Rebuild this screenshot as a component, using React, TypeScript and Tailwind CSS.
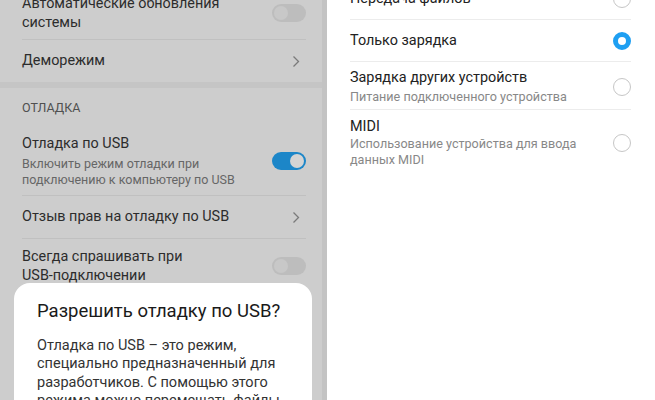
import React from 'react';

const Chevron = () => (
  <svg width="8" height="13" viewBox="0 0 8 13" fill="none">
    <path d="M1.5 1.5L6.5 6.5L1.5 11.5" stroke="#7a7a7a" strokeWidth="1.3" />
  </svg>
);

const Toggle = ({ on }: { on: boolean }) =>
  on ? (
    <div className="flex h-[18px] w-[34px] items-center justify-end rounded-full bg-[#1c86c8] px-[2px]">
      <div className="h-[14px] w-[14px] rounded-full bg-[#d4d4d4]" />
    </div>
  ) : (
    <div className="flex h-[18px] w-[34px] items-center rounded-full bg-[#bdbdbd] px-[2px]">
      <div className="h-[14px] w-[14px] rounded-full bg-[#c8c8c8]" />
    </div>
  );

const Radio = ({ on }: { on?: boolean }) =>
  on ? (
    <div className="h-[18px] w-[18px] rounded-full border-[5px] border-[#1e9ff2] bg-white" />
  ) : (
    <div className="h-[18px] w-[18px] rounded-full border border-[#c6c6c6] bg-white" />
  );

const App = () => {
  return (
    <div className="flex h-[400px] w-[655px] overflow-hidden bg-white font-['Roboto',sans-serif]">
      {/* left: settings dimmed behind dialog */}
      <div className="relative flex h-[400px] w-[327px] shrink-0 overflow-hidden bg-[#cdcdcd]">
        <div className="flex w-[322px] flex-col">
          <div className="-mt-[14px] pl-[22px] pr-[16px]">
            <div className="flex items-center justify-between border-b border-[#c0c0c0] pt-[8px] pb-[7px]">
              <div className="text-[14.4px] leading-[19px] text-[#2c2c2c]">
                Автоматические обновления
                <br />
                системы
              </div>
              <Toggle on={false} />
            </div>
            <div className="flex h-[42px] items-center justify-between pr-[6px]">
              <span className="text-[14.4px] text-[#2c2c2c]">Деморежим</span>
              <Chevron />
            </div>
          </div>
          <div className="h-[6px] bg-[#c5c5c5]" />
          <div className="pl-[22px] pr-[16px]">
            <div className="h-[37px] pt-[12px] text-[12.5px] leading-[16px] text-[#505050]">ОТЛАДКА</div>
            <div className="flex items-center justify-between border-b border-[#c0c0c0] pt-[9px] pb-[7px]">
              <div>
                <div className="text-[14.4px] leading-[19px] text-[#2c2c2c]">Отладка по USB</div>
                <div className="mt-[3px] text-[12.5px] leading-[16px] text-[#666666]">
                  Включить режим отладки при
                  <br />
                  подключению к компьютеру по USB
                </div>
              </div>
              <Toggle on />
            </div>
            <div className="flex h-[43px] items-center justify-between border-b border-[#c0c0c0] pr-[6px]">
              <span className="text-[14.4px] text-[#2c2c2c]">Отзыв прав на отладку по USB</span>
              <Chevron />
            </div>
            <div className="flex items-center justify-between pt-[8px]">
              <div className="text-[14.4px] leading-[19px] text-[#2c2c2c]">
                Всегда спрашивать при
                <br />
                USB-подключении
              </div>
              <Toggle on={false} />
            </div>
          </div>
        </div>
        <div className="w-[5px] bg-[#c3c3c3]" />

        {/* dialog */}
        <div className="absolute left-[14px] top-[283px] h-[160px] w-[298px] rounded-[16px] bg-white px-[23px] pt-[16px]">
          <div className="text-[18.5px] leading-[24px] text-[#1a1a1a]">Разрешить отладку по USB?</div>
          <div className="mt-[14px] text-[14.5px] leading-[18.3px] text-[#333333]">
            Отладка по USB – это режим,
            <br />
            специально предназначенный для
            <br />
            разработчиков. С помощью этого
            <br />
            режима можно перемещать файлы
          </div>
        </div>
      </div>

      {/* right: USB mode */}
      <div className="flex flex-1 flex-col pl-[23px] pr-[24px]">
        <div className="-mt-[22px] flex h-[42px] items-center justify-between border-b border-[#ececec]">
          <span className="text-[14.4px] text-[#222222]">Передача файлов</span>
          <Radio />
        </div>
        <div className="flex h-[42px] items-center justify-between border-b border-[#ececec]">
          <span className="text-[14.4px] text-[#222222]">Только зарядка</span>
          <Radio on />
        </div>
        <div className="flex items-center justify-between border-b border-[#ececec] pt-[6px] pb-[4px]">
          <div>
            <div className="text-[14.4px] leading-[19px] text-[#222222]">Зарядка других устройств</div>
            <div className="mt-[1px] text-[12.6px] leading-[17px] text-[#888888]">Питание подключенного устройства</div>
          </div>
          <Radio />
        </div>
        <div className="flex items-center justify-between pt-[7px]">
          <div>
            <div className="text-[14.4px] leading-[19px] text-[#222222]">MIDI</div>
            <div className="text-[12.6px] leading-[16px] text-[#888888]">
              Использование устройства для ввода
              <br />
              данных MIDI
            </div>
          </div>
          <Radio />
        </div>
      </div>
    </div>
  );
};

export default App;
